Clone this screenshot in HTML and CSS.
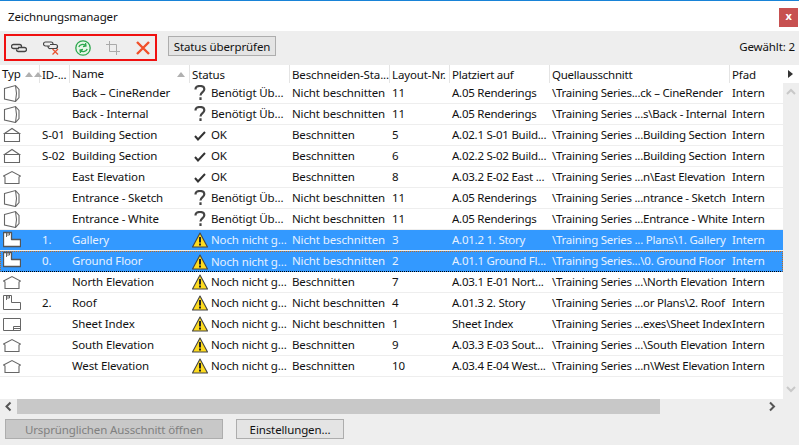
FILE: index.html
```html
<!DOCTYPE html>
<html lang="de">
<head>
    <meta charset="UTF-8">
    <title>Zeichnungsmanager</title>
    <link rel="stylesheet" href="styles.css">
</head>
<body>
    <svg class="defs" width="0" height="0">
        <symbol id="i-3d" viewBox="0 0 18 18"><path d="M1.5 4.500 12.500 1.500 16 5.500V13.500L12.500 17.500 1.500 15ZM12.500 1.500 13.500 9.500 12.500 17.500" fill="none" stroke="#666" stroke-width="1.100"/></symbol>
        <symbol id="i-sec" viewBox="0 0 18 18"><path d="M1.500 7.500 9 2.500 16.500 7.500M.5 7.500H17.500M1.500 8V15.500H16.500V8" fill="none" stroke="#666" stroke-width="1.100"/></symbol>
        <symbol id="i-ele" viewBox="0 0 18 18"><path d="M.5 8 9 3.500 17.500 8 16 9V15.500H2V9Z" fill="none" stroke="#666" stroke-width="1.100"/></symbol>
        <symbol id="i-plan" viewBox="0 0 18 18"><path d="M.5 1.500H8.500V8.500H17.500V15.500H.5Z" fill="none" stroke="#666" stroke-linejoin="round"/><path d="M3.500 2V6M3.500 2H6.500V4H4" fill="none" stroke="#666"/></symbol>
        <symbol id="i-plan-w" viewBox="0 0 18 18"><path d="M.5 1.500H8.500V8.500H17.500V15.500H.5Z" fill="#fff" stroke="#555" stroke-width="1.300" stroke-linejoin="round"/><path d="M3.500 2V6M3.500 2H6.500V4H4" fill="none" stroke="#666"/></symbol>
        <symbol id="i-sheet" viewBox="0 0 18 18"><path d="M.5 3.500H17.500V15.500H.5ZM10.500 15.500V11.500H17.500M10.500 13.500H17.500" fill="none" stroke="#666" stroke-linejoin="round"/></symbol>
        <symbol id="i-q" viewBox="0 0 16 16"><path d="M3.500 4.500C3.500 2 5.500 1 8 1 10.500 1 12.300 2.300 12.300 4.300 12.300 7.200 8.500 7 8.500 10.500M8.500 12.200V15" fill="none" stroke="#444" stroke-width="2.200"/></symbol>
        <symbol id="i-ok" viewBox="0 0 16 16"><path d="M3 9 6 12.500 13 5" fill="none" stroke="#333" stroke-width="2"/></symbol>
        <symbol id="i-warn" viewBox="0 0 16 16"><path d="M8 1 15.500 15H.5Z" fill="#ffdc1e" stroke="#444" stroke-width="1.100" stroke-linejoin="round"/><path d="M8 5V10.500M8 11.500V13.500" stroke="#222" stroke-width="2"/></symbol>
    </svg>

    <div class="window">
        <div class="titlebar">
            <span class="title">Zeichnungsmanager</span>
            <span class="close">x</span>
        </div>

        <div class="toolbar">
            <div class="tools">
                <svg width="16" height="16" viewBox="0 0 16 16"><path d="M8 8.500H2.500A2 2 0 0 1 2.500 4.500H8.500A2 2 0 0 1 10.500 6.500V7.500M7 7.500H13.500A2 2 0 0 1 13.500 11.500H7.500A2 2 0 0 1 5.500 9.500" fill="none" stroke="#444" stroke-width="1.300"/></svg>
                <svg width="16" height="16" viewBox="0 0 16 16"><path d="M7 6H2.500A2 2 0 0 1 2.500 2H8A2 2 0 0 1 10 4V5M7 4.500H12.500A2 2 0 0 1 12.500 8.500H7.500A2 2 0 0 1 5 6.500" fill="none" stroke="#444" stroke-width="1.200"/><path d="M9.500 9 15 14.500M15 9 9.500 14.500" stroke="#e8502f" stroke-width="1.200"/></svg>
                <svg width="16" height="16" viewBox="0 0 16 16"><circle cx="8" cy="8" r="7.200" fill="#e8f6e8" stroke="#2ea84f" stroke-width="1.300"/><path d="M3.800 7C4.500 4.500 8 3.500 10.500 5.500M12.200 9C11.500 11.500 8 12.500 5.500 10.500M10.500 3 11 6 8 6.500M5.500 13 5 10 8 9.500" fill="none" stroke="#2ea84f" stroke-width="1.300"/></svg>
                <svg width="14" height="14" viewBox="0 0 14 14"><path d="M3.500 0V10.500H14M0 3.500H10.500V14" fill="none" stroke="#aaa"/></svg>
                <svg width="14" height="14" viewBox="0 0 14 14"><path d="M1 1 13 13M13 1 1 13" stroke="#f0502a" stroke-width="2.400"/></svg>
            </div>
            <button class="btn btn-status">Status überprüfen</button>
            <span class="selected">Gewählt: 2</span>
        </div>

        <div class="table">
            <div class="row head">
                <div class="sort">Typ <i class="tri"></i><i class="tri"></i></div>
                <div>ID-...</div>
                <div class="sort-right">Name <i class="tri"></i></div>
                <div>Status</div>
                <div>Beschneiden-Sta...</div>
                <div>Layout-Nr.</div>
                <div>Platziert auf</div>
                <div>Quellausschnitt</div>
                <div class="last">Pfad <i class="arrow"></i></div>
            </div>
            <div class="body">
                <div class="rows">
                    <div class="row"><div><svg class="ico"><use href="#i-3d"/></svg></div><div></div><div>Back – CineRender</div><div class="st"><svg class="sti"><use href="#i-q"/></svg>Benötigt Üb...</div><div>Nicht beschnitten</div><div>11</div><div>A.05 Renderings</div><div>\Training Series...ck – CineRender</div><div>Intern</div></div>
                    <div class="row"><div><svg class="ico"><use href="#i-3d"/></svg></div><div></div><div>Back - Internal</div><div class="st"><svg class="sti"><use href="#i-q"/></svg>Benötigt Üb...</div><div>Nicht beschnitten</div><div>11</div><div>A.05 Renderings</div><div>\Training Series ...s\Back - Internal</div><div>Intern</div></div>
                    <div class="row"><div><svg class="ico"><use href="#i-sec"/></svg></div><div>S-01</div><div>Building Section</div><div class="st"><svg class="sti"><use href="#i-ok"/></svg>OK</div><div>Beschnitten</div><div>5</div><div>A.02.1 S-01 Build...</div><div>\Training Series ...Building Section</div><div>Intern</div></div>
                    <div class="row"><div><svg class="ico"><use href="#i-sec"/></svg></div><div>S-02</div><div>Building Section</div><div class="st"><svg class="sti"><use href="#i-ok"/></svg>OK</div><div>Beschnitten</div><div>6</div><div>A.02.2 S-02 Build...</div><div>\Training Series ...Building Section</div><div>Intern</div></div>
                    <div class="row"><div><svg class="ico"><use href="#i-ele"/></svg></div><div></div><div>East Elevation</div><div class="st"><svg class="sti"><use href="#i-ok"/></svg>OK</div><div>Beschnitten</div><div>8</div><div>A.03.2 E-02 East ...</div><div>\Training Series ...n\East Elevation</div><div>Intern</div></div>
                    <div class="row"><div><svg class="ico"><use href="#i-3d"/></svg></div><div></div><div>Entrance - Sketch</div><div class="st"><svg class="sti"><use href="#i-q"/></svg>Benötigt Üb...</div><div>Nicht beschnitten</div><div>11</div><div>A.05 Renderings</div><div>\Training Series ...ntrance - Sketch</div><div>Intern</div></div>
                    <div class="row"><div><svg class="ico"><use href="#i-3d"/></svg></div><div></div><div>Entrance - White</div><div class="st"><svg class="sti"><use href="#i-q"/></svg>Benötigt Üb...</div><div>Nicht beschnitten</div><div>11</div><div>A.05 Renderings</div><div>\Training Series ...Entrance - White</div><div>Intern</div></div>
                    <div class="row sel"><div><svg class="ico"><use href="#i-plan-w"/></svg></div><div>1.</div><div>Gallery</div><div class="st"><svg class="sti"><use href="#i-warn"/></svg>Noch nicht g...</div><div>Nicht beschnitten</div><div>3</div><div>A.01.2 1. Story</div><div>\Training Series ... Plans\1. Gallery</div><div>Intern</div></div>
                    <div class="row sel focus"><div><svg class="ico"><use href="#i-plan-w"/></svg></div><div>0.</div><div>Ground Floor</div><div class="st"><svg class="sti"><use href="#i-warn"/></svg>Noch nicht g...</div><div>Nicht beschnitten</div><div>2</div><div>A.01.1 Ground Fl...</div><div>\Training Series...\0. Ground Floor</div><div>Intern</div></div>
                    <div class="row"><div><svg class="ico"><use href="#i-ele"/></svg></div><div></div><div>North Elevation</div><div class="st"><svg class="sti"><use href="#i-warn"/></svg>Noch nicht g...</div><div>Beschnitten</div><div>7</div><div>A.03.1 E-01 Nort...</div><div>\Training Series ...\North Elevation</div><div>Intern</div></div>
                    <div class="row"><div><svg class="ico"><use href="#i-plan"/></svg></div><div>2.</div><div>Roof</div><div class="st"><svg class="sti"><use href="#i-warn"/></svg>Noch nicht g...</div><div>Nicht beschnitten</div><div>4</div><div>A.01.3 2. Story</div><div>\Training Series ...or Plans\2. Roof</div><div>Intern</div></div>
                    <div class="row"><div><svg class="ico"><use href="#i-sheet"/></svg></div><div></div><div>Sheet Index</div><div class="st"><svg class="sti"><use href="#i-warn"/></svg>Noch nicht g...</div><div>Nicht beschnitten</div><div>1</div><div>Sheet Index</div><div>\Training Series ...exes\Sheet Index</div><div>Intern</div></div>
                    <div class="row"><div><svg class="ico"><use href="#i-ele"/></svg></div><div></div><div>South Elevation</div><div class="st"><svg class="sti"><use href="#i-warn"/></svg>Noch nicht g...</div><div>Beschnitten</div><div>9</div><div>A.03.3 E-03 Sout...</div><div>\Training Series ...\South Elevation</div><div>Intern</div></div>
                    <div class="row"><div><svg class="ico"><use href="#i-ele"/></svg></div><div></div><div>West Elevation</div><div class="st"><svg class="sti"><use href="#i-warn"/></svg>Noch nicht g...</div><div>Beschnitten</div><div>10</div><div>A.03.4 E-04 West...</div><div>\Training Series ...n\West Elevation</div><div>Intern</div></div>
                </div>
                <div class="vscroll">
                    <svg width="16" height="10" viewBox="0 0 16 10"><path d="M4 7 8 3 12 7" fill="none" stroke="#c8c8c8" stroke-width="2"/></svg>
                    <svg width="16" height="10" viewBox="0 0 16 10"><path d="M4 3 8 7 12 3" fill="none" stroke="#c8c8c8" stroke-width="2"/></svg>
                </div>
            </div>
        </div>

        <div class="hscroll">
            <svg class="harrow" width="17" height="15" viewBox="0 0 17 15"><path d="M10.500 3.500 6.500 7.500 10.500 11.500" fill="none" stroke="#555" stroke-width="2"/></svg>
            <div class="thumb"></div>
            <svg class="harrow" width="17" height="15" viewBox="0 0 17 15"><path d="M6 3.500 10 7.500 6 11.500" fill="none" stroke="#555" stroke-width="2"/></svg>
        </div>

        <div class="footer">
            <button class="btn btn-open" disabled>Ursprünglichen Ausschnitt öffnen</button>
            <button class="btn btn-settings">Einstellungen...</button>
        </div>
    </div>
</body>
</html>
```

FILE: styles.css
```css
html, body {
    margin: 0;
    padding: 0;
    height: 100%;
    overflow: hidden;
}
body {
    font-family: 'Noto Sans', sans-serif;
    font-size: 11.5px;
    letter-spacing: -0.12px;
    color: #111;
    background-color: #eee;
}
.defs {
    display: block;
    height: 0;
}
.window {
    display: flex;
    flex-direction: column;
    height: 445px;
    box-sizing: border-box;
    border-top: 1px solid #1883d7;
}
.titlebar {
    display: flex;
    justify-content: space-between;
    height: 30px;
    background-color: #fff;
    box-sizing: border-box;
    padding: 7px 1px 0 8px;
}
.title {
    line-height: 17px;
}
.close {
    width: 19px;
    height: 19px;
    background-color: #c75050;
    color: #fff;
    font-weight: bold;
    font-size: 11px;
    line-height: 16px;
    text-align: center;
}
.toolbar {
    display: flex;
    align-items: flex-start;
    height: 34px;
    padding: 0 4px;
    line-height: 32px;
}
.tools {
    display: flex;
    align-items: center;
    justify-content: space-between;
    width: 153px;
    height: 27px;
    box-sizing: border-box;
    border: 2px solid #f01010;
    padding: 0 5px;
    margin: 3px 11px 0 0;
}
.btn {
    font-family: inherit;
    font-size: inherit;
    letter-spacing: inherit;
    height: 20px;
    padding: 0;
    color: #111;
    background-color: #e4e4e4;
    border: 1px solid #adadad;
}
.btn-status {
    width: 108px;
    margin-top: 5px;
}
.selected {
    margin-left: auto;
}
.table {
    background-color: #fff;
    height: 334px;
    display: flex;
    flex-direction: column;
}
.row {
    display: grid;
    grid-template-columns: 40px 30px 120px 100px 100px 60px 100px 180px 53px;
    height: 21px;
    box-sizing: border-box;
    border-bottom: 1px solid #eee;
    line-height: 20px;
    white-space: nowrap;
}
.row > div {
    padding-left: 2px;
}
.row > div:nth-child(7), .row > div:nth-child(8) {
    letter-spacing: -0.25px;
}
.row .st {
    display: flex;
    align-items: center;
    gap: 3px;
}
.head {
    grid-template-columns: 40px 30px 120px 100px 100px 60px 100px 180px 69px;
    height: 18px;
    border-bottom: 0;
    line-height: 20px;
}
.head > div {
    border-right: 1px solid #e4e4e4;
    box-sizing: border-box;
    height: 18px;
}
.head > .last {
    border-right: 0;
    display: flex;
    justify-content: space-between;
    padding-right: 6px;
}
.sort, .sort-right {
    display: flex;
    align-items: center;
}
.sort {
    gap: 1px;
}
.sort-right {
    justify-content: space-between;
    padding-right: 4px;
}
.tri {
    width: 0;
    height: 0;
    border-left: 4px solid transparent;
    border-right: 4px solid transparent;
    border-bottom: 5px solid #b0b0b0;
}
.sort .tri:first-of-type {
    margin-left: 3px;
}
.arrow {
    align-self: center;
    width: 0;
    height: 0;
    border-top: 4px solid transparent;
    border-bottom: 4px solid transparent;
    border-left: 5px solid #333;
}
.body {
    display: flex;
    flex: 1;
}
.rows {
    width: 783px;
}
.sel {
    background-color: #3399ff;
    color: #e6f1ff;
    border-bottom-color: #eee;
}
.focus {
    grid-template-columns: 39px 30px 120px 100px 100px 60px 100px 180px 53px;
    border: 1px dotted #c06a20;
    border-bottom-color: #000;
    line-height: 18px;
}
.focus > div:first-child {
    margin-left: -1px;
}
.focus .ico {
    margin-top: -1px;
}
.ico {
    display: block;
    width: 18px;
    height: 18px;
    margin: 1px 0 0 1px;
    overflow: visible;
}
.sti {
    width: 16px;
    height: 16px;
    flex: none;
}
.vscroll {
    width: 16px;
    background-color: #eee;
    display: flex;
    flex-direction: column;
    justify-content: space-between;
    padding: 4px 0 5px;
}
.hscroll {
    display: flex;
    height: 15px;
}
.thumb {
    width: 643px;
    background-color: #c8c8c8;
}
.harrow:last-child {
    margin-left: auto;
    margin-right: 18px;
}
.footer {
    display: flex;
    gap: 13px;
    padding: 5px 0 0 5px;
}
.btn-open {
    width: 218px;
    background-color: #c8c8c8;
    color: #808080;
}
.btn-settings {
    width: 108px;
}
```
